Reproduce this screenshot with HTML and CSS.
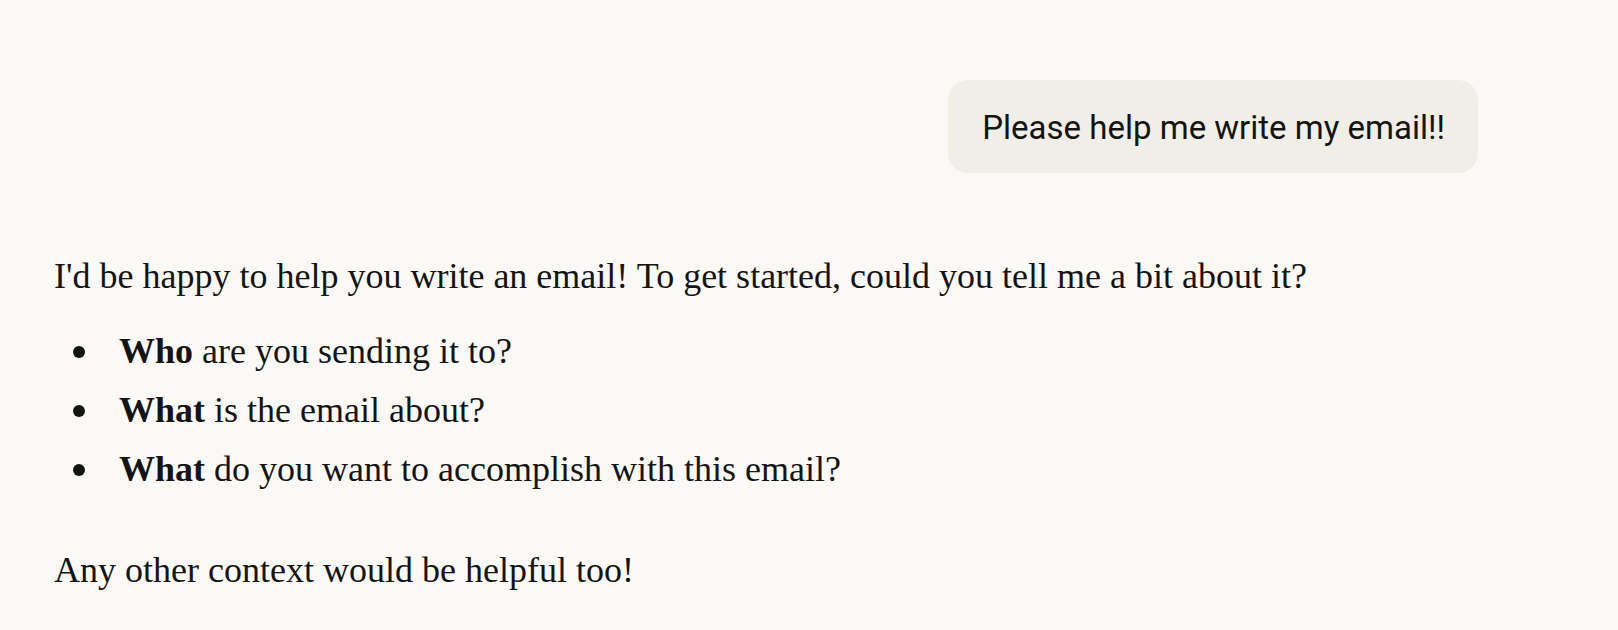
FILE: index.html
```html
<!DOCTYPE html>
<html lang="en">
<head>
<meta charset="utf-8">
<title>Chat</title>
<link rel="stylesheet" href="styles.css">
</head>
<body>
<main class="chat">
  <div class="user-row">
    <div class="bubble">Please help me write my email!!</div>
  </div>
  <div class="reply">
    <p class="para">I'd be happy to help you write an email! To get started, could you tell me a bit about it?</p>
    <ul class="list">
      <li class="item"><span class="item-text"><strong>Who</strong> are you sending it to?</span></li>
      <li class="item"><span class="item-text"><strong>What</strong> is the email about?</span></li>
      <li class="item"><span class="item-text"><strong>What</strong> do you want to accomplish with this email?</span></li>
    </ul>
    <p class="para">Any other context would be helpful too!</p>
  </div>
</main>
</body>
</html>
```
FILE: styles.css
```css
html, body {
  margin: 0;
  padding: 0;
  background: #faf9f5;
  color: #141413;
}

.chat {
  padding: 80px 140px 0 54px;
}

.user-row {
  display: flex;
  justify-content: flex-end;
}

.bubble {
  background: #f0eee6;
  border-radius: 20px;
  padding: 24.5px 33px 22.5px 34px;
  font-family: Roboto, "Liberation Sans", sans-serif;
  font-size: 33px;
  line-height: 46px;
  color: #141413;
  white-space: nowrap;
}

.reply {
  margin-top: 75px;
  font-family: "Liberation Serif", "Times New Roman", serif;
  font-size: 36px;
  line-height: 57.6px;
  color: #141413;
}

.para {
  margin: 0;
}

.list {
  list-style: none;
  margin: 16px 0 43px 0;
  padding: 0;
}

.item {
  display: flex;
  align-items: flex-start;
  line-height: 59px;
}

.item::before {
  content: "";
  flex: none;
  width: 12px;
  height: 12px;
  border-radius: 50%;
  background: #141413;
  margin: 24.5px 34px 0 19px;
}

.item-text strong {
  font-weight: 700;
}
```
